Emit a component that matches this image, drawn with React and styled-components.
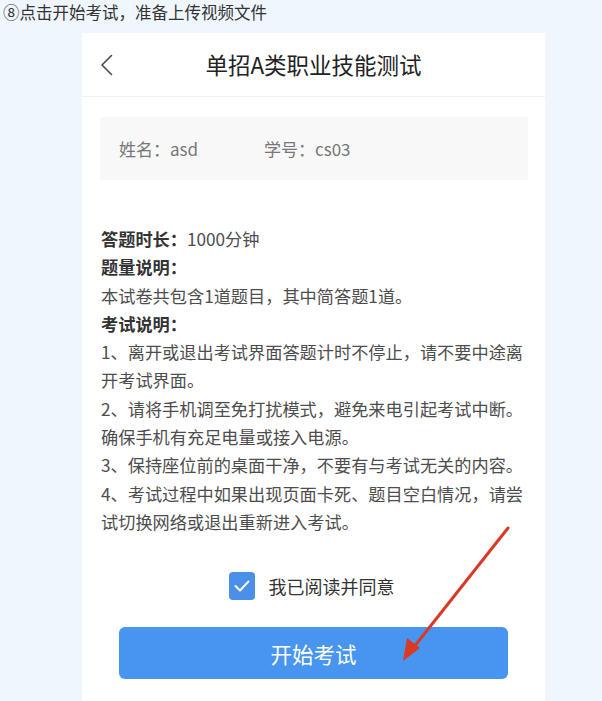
import styled, { createGlobalStyle } from 'styled-components';

const GlobalStyle = createGlobalStyle`
  html, body {
    margin: 0;
    padding: 0;
    background: #eff6fe;
  }
  body {
    font-family: "Noto Sans CJK SC", "Noto Sans", sans-serif;
  }
`;

const rules = [
  { label: '答题时长：', text: '1000分钟' },
  { label: '题量说明：' },
  { text: '本试卷共包含1道题目，其中简答题1道。' },
  { label: '考试说明：' },
  { text: '1、离开或退出考试界面答题计时不停止，请不要中途离' },
  { text: '开考试界面。' },
  { text: '2、请将手机调至免打扰模式，避免来电引起考试中断。' },
  { text: '确保手机有充足电量或接入电源。' },
  { text: '3、保持座位前的桌面干净，不要有与考试无关的内容。' },
  { text: '4、考试过程中如果出现页面卡死、题目空白情况，请尝' },
  { text: '试切换网络或退出重新进入考试。' },
];

function App() {
  return (
    <>
      <GlobalStyle />
      <Page>
        <Caption>⑧点击开始考试，准备上传视频文件</Caption>
        <Phone>
          <Header>
            <BackButton aria-label="返回">
              <svg width="13" height="22" viewBox="0 0 13 22" fill="none">
                <polyline points="11.5,1.5 2,11 11.5,20.5" stroke="#4a4a4a" strokeWidth="1.6" strokeLinecap="round" strokeLinejoin="round" />
              </svg>
            </BackButton>
            <Title>单招A类职业技能测试</Title>
            <span />
          </Header>

          <InfoBox>
            <InfoItem $width={145}>姓名：asd</InfoItem>
            <InfoItem>学号：cs03</InfoItem>
          </InfoBox>

          <Rules>
            {rules.map((r, i) => (
              <Line key={i}>
                {r.label && <Label>{r.label}</Label>}
                {r.text}
              </Line>
            ))}
          </Rules>

          <AgreeRow>
            <CheckBox>
              <svg width="16" height="12" viewBox="0 0 16 12" fill="none">
                <polyline points="1.5,6 6,10.5 14.5,1.5" stroke="#fff" strokeWidth="2" strokeLinecap="round" strokeLinejoin="round" />
              </svg>
            </CheckBox>
            <AgreeText>我已阅读并同意</AgreeText>
          </AgreeRow>

          <StartButton>开始考试</StartButton>
        </Phone>

        <Arrow width="602" height="701" viewBox="0 0 602 701">
          <line x1="508" y1="528" x2="410" y2="652" stroke="#d93a26" strokeWidth="3" strokeLinecap="round" />
          <polygon points="403,661 407,638 420,648" fill="#d93a26" />
        </Arrow>
      </Page>
    </>
  );
}

const Page = styled.div`
  position: relative;
  height: 701px;
  overflow: hidden;
`;

const Caption = styled.div`
  padding-left: 3px;
  height: 24px;
  font-size: 16.5px;
  line-height: 24px;
  color: #333;
`;

const Phone = styled.div`
  margin: 9px 0 0 82px;
  width: 463px;
  height: 680px;
  background: #fff;
  display: flex;
  flex-direction: column;
`;

const Header = styled.div`
  height: 63px;
  border-bottom: 1px solid #f1f1f1;
  display: grid;
  grid-template-columns: 1fr auto 1fr;
  align-items: center;
`;

const BackButton = styled.div`
  padding-left: 18px;
  display: flex;
  align-items: center;
`;

const Title = styled.div`
  font-size: 22.5px;
  color: #222;
  padding-bottom: 2px;
`;

const InfoBox = styled.div`
  margin: 20px 17px 0 18px;
  height: 63px;
  background: #f8f8f8;
  padding-left: 19px;
  display: flex;
  align-items: center;
`;

const InfoItem = styled.div`
  width: ${({ $width }) => ($width ? `${$width}px` : 'auto')};
  font-size: 17px;
  color: #777;
`;

const Rules = styled.div`
  margin-top: 45px;
  padding: 0 19px;
  font-size: 17.2px;
  line-height: 28.3px;
  color: #4d4d4d;
`;

const Line = styled.div`
  white-space: nowrap;
`;

const Label = styled.span`
  font-weight: 700;
  color: #333;
`;

const AgreeRow = styled.div`
  margin-top: 36px;
  display: flex;
  align-items: center;
  justify-content: center;
  gap: 14px;
  padding-right: 4px;
`;

const CheckBox = styled.div`
  width: 26px;
  height: 28px;
  border-radius: 4px;
  background: #4a8fe8;
  display: flex;
  align-items: center;
  justify-content: center;
`;

const AgreeText = styled.div`
  font-size: 18px;
  color: #333;
`;

const StartButton = styled.div`
  margin: 27px 37px 0;
  height: 52px;
  border-radius: 6px;
  background: #4795ef;
  color: #fff;
  font-size: 21.5px;
  display: flex;
  align-items: center;
  justify-content: center;
`;

const Arrow = styled.svg`
  position: absolute;
  left: 0;
  top: 0;
  pointer-events: none;
`;

export default App;
